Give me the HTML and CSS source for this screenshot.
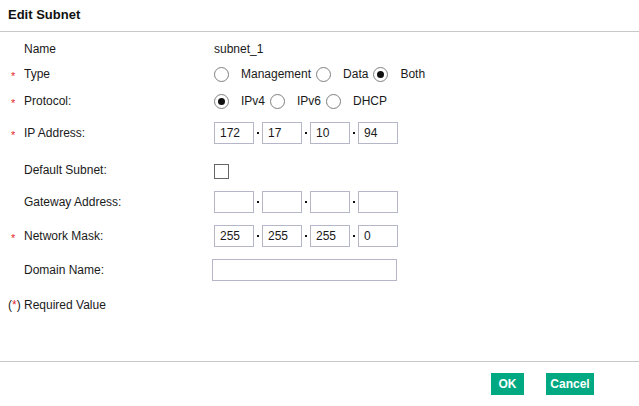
FILE: index.html
```html
<!DOCTYPE html>
<html>
<head>
<meta charset="utf-8">
<link rel="stylesheet" href="styles.css">
</head>
<body>
<div class="dialog">
  <div class="header">Edit Subnet</div>
  <div class="form">
    <div class="row r-name">
      <span class="star"></span><span class="label">Name</span>
      <span class="value">subnet_1</span>
    </div>
    <div class="row r-type">
      <span class="star">*</span><span class="label">Type</span>
      <span class="value radios">
        <span class="radio"></span><span class="rlabel">Management</span>
        <span class="radio"></span><span class="rlabel">Data</span>
        <span class="radio checked"></span><span class="rlabel">Both</span>
      </span>
    </div>
    <div class="row r-proto">
      <span class="star">*</span><span class="label">Protocol:</span>
      <span class="value radios">
        <span class="radio checked"></span><span class="rlabel">IPv4</span>
        <span class="radio"></span><span class="rlabel">IPv6</span>
        <span class="radio"></span><span class="rlabel">DHCP</span>
      </span>
    </div>
    <div class="row r-ip">
      <span class="star">*</span><span class="label">IP Address:</span>
      <span class="value ip">
        <span class="box">172</span><span class="dot"></span>
        <span class="box">17</span><span class="dot"></span>
        <span class="box">10</span><span class="dot"></span>
        <span class="box">94</span>
      </span>
    </div>
    <div class="row r-def">
      <span class="star"></span><span class="label">Default Subnet:</span>
      <span class="value"><span class="check"></span></span>
    </div>
    <div class="row r-gw">
      <span class="star"></span><span class="label">Gateway Address:</span>
      <span class="value ip">
        <span class="box"></span><span class="dot"></span>
        <span class="box"></span><span class="dot"></span>
        <span class="box"></span><span class="dot"></span>
        <span class="box"></span>
      </span>
    </div>
    <div class="row r-mask">
      <span class="star">*</span><span class="label">Network Mask:</span>
      <span class="value ip">
        <span class="box">255</span><span class="dot"></span>
        <span class="box">255</span><span class="dot"></span>
        <span class="box">255</span><span class="dot"></span>
        <span class="box">0</span>
      </span>
    </div>
    <div class="row r-dom">
      <span class="star"></span><span class="label">Domain Name:</span>
      <span class="value"><span class="textbox"></span></span>
    </div>
    <div class="required">(<span class="red">*</span>) Required Value</div>
  </div>
  <div class="footer">
    <button class="btn ok">OK</button>
    <button class="btn cancel">Cancel</button>
  </div>
</div>
</body>
</html>
```
FILE: styles.css
```css
html, body {
  margin: 0;
  padding: 0;
  background: #fff;
}
body {
  font-family: "Liberation Sans", Arial, sans-serif;
  font-size: 12px;
  color: #1a1a1a;
}
.dialog {
  height: 406px;
  display: flex;
  flex-direction: column;
}
.header {
  height: 31px;
  line-height: 30px;
  padding-left: 8px;
  font-size: 13px;
  font-weight: bold;
  color: #111;
  border-bottom: 1px solid #c8c8c8;
}
.form {
  flex: 1;
}
.row {
  display: flex;
  align-items: center;
  height: 22px;
  padding-left: 11px;
}
.r-name { margin-top: 6px; }
.r-type { margin-top: 3px; }
.r-proto { margin-top: 5px; }
.r-ip { margin-top: 10px; }
.r-def { margin-top: 15px; }
.r-gw { margin-top: 10px; }
.r-mask { margin-top: 12px; }
.r-dom { margin-top: 12px; }
.star {
  width: 13px;
  color: #e5262c;
  font-size: 11px;
  position: relative;
  top: 2px;
}
.label {
  width: 190px;
}
.value {
  display: flex;
  align-items: center;
}
.radio {
  width: 13px;
  height: 13px;
  border: 1px solid #808080;
  border-radius: 50%;
  position: relative;
  box-sizing: content-box;
}
.radio.checked::after {
  content: "";
  position: absolute;
  left: 3px;
  top: 3px;
  width: 7px;
  height: 7px;
  border-radius: 50%;
  background: #111;
}
.rlabel {
  margin-left: 12px;
  margin-right: 5px;
}
.ip .box {
  height: 20px;
  border: 1px solid #b6b6c9;
  line-height: 20px;
  padding-left: 5px;
  box-sizing: content-box;
  width: 33px;
}
.dot {
  width: 2px;
  height: 2px;
  background: #111;
  margin: 0 3px;
}
.check {
  width: 13px;
  height: 13px;
  border: 1px solid #666;
  margin-top: 2px;
}
.textbox {
  display: block;
  width: 183px;
  height: 20px;
  border: 1px solid #b6b6c9;
  margin-left: -2px;
}
.required {
  margin-top: 17px;
  padding-left: 8px;
  height: 14px;
  line-height: 14px;
}
.red { color: #e5262c; }
.footer {
  border-top: 1px solid #c8c8c8;
  display: flex;
  justify-content: flex-end;
  align-items: flex-start;
  padding-top: 11px;
  padding-right: 45px;
  box-sizing: border-box;
  height: 45px;
}
.btn {
  height: 22px;
  border: none;
  background: #01a982;
  color: #fff;
  font-family: "Liberation Sans", Arial, sans-serif;
  font-size: 12px;
  font-weight: bold;
  padding: 0;
  margin-left: 22px;
}
.ok { width: 33px; }
.cancel { width: 48px; }
```
